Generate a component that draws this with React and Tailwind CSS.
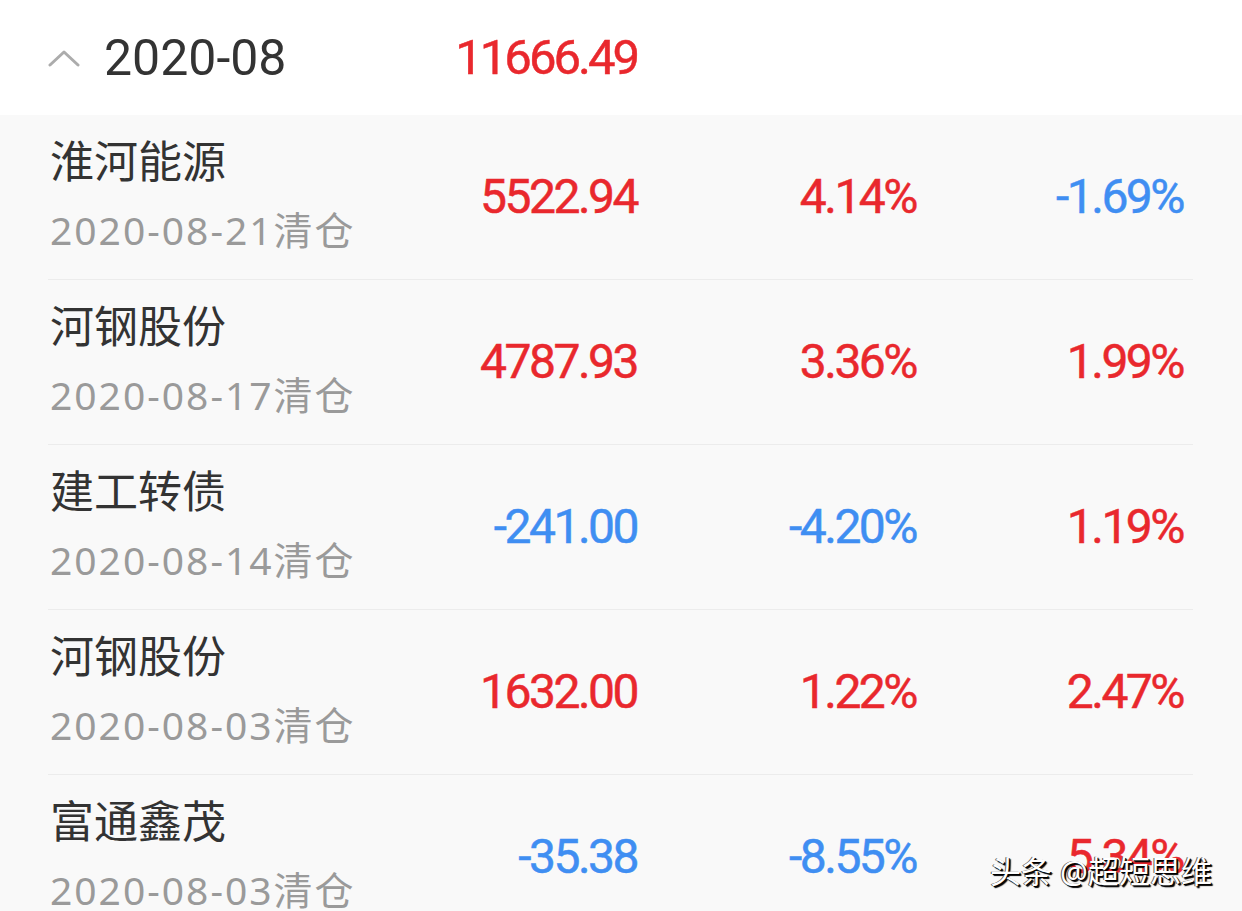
import React from "react";

const rows = [
  { name: "淮河能源", date: "2020-08-21", profit: "5522.94", pct: "4.14%", mkt: "-1.69%" },
  { name: "河钢股份", date: "2020-08-17", profit: "4787.93", pct: "3.36%", mkt: "1.99%" },
  { name: "建工转债", date: "2020-08-14", profit: "-241.00", pct: "-4.20%", mkt: "1.19%" },
  { name: "河钢股份", date: "2020-08-03", profit: "1632.00", pct: "1.22%", mkt: "2.47%" },
  { name: "富通鑫茂", date: "2020-08-03", profit: "-35.38", pct: "-8.55%", mkt: "5.34%" },
];

// red for gains, blue for losses
const tone = (v) => (v.startsWith("-") ? "text-[#3f8ef2]" : "text-[#e9282d]");

const numCls =
  "text-right text-[48px] font-[Roboto,sans-serif] font-normal tracking-[-2.5px] [-webkit-text-stroke:0.5px_currentColor]";

function Row({ r }) {
  return (
    <div className="ml-[48px] mr-[49px] h-[165px] border-b border-[#ececec] flex items-center pr-[10px]">
      <div className="flex-1 flex flex-col pl-[2px] font-['Noto_Sans','Noto_Sans_CJK_SC',sans-serif]">
        <div className="text-[44px] leading-[66px] text-[#333]">{r.name}</div>
        <div className="text-[39px] leading-[72px] text-[#9a9a9a] tracking-[2px]">
          {r.date}清仓
        </div>
      </div>
      <div className={`w-[200px] ${numCls} ${tone(r.profit)}`}>{r.profit}</div>
      <div className={`w-[279px] ${numCls} ${tone(r.pct)}`}>{r.pct}</div>
      <div className={`w-[267px] ${numCls} ${tone(r.mkt)}`}>{r.mkt}</div>
    </div>
  );
}

export default function App() {
  return (
    <div className="relative w-[1242px] h-[911px] overflow-hidden bg-[#f9f9f9]">
      {/* Month header */}
      <div className="h-[115px] bg-white flex items-center pl-[48px]">
        <div className="w-[56px] flex items-center">
          <svg width="32" height="18" viewBox="0 0 32 18" fill="none">
            <path d="M2 16 L16 3 L30 16" stroke="#acacac" strokeWidth="3" strokeLinecap="round" strokeLinejoin="round" />
          </svg>
        </div>
        <div className="w-[333px] text-[50px] text-[#333] leading-none font-[Roboto,sans-serif]">
          2020-08
        </div>
        <div className="w-[200px] text-right text-[49px] font-normal tracking-[-3px] text-[#e9282d] leading-none font-[Roboto,sans-serif] [-webkit-text-stroke:0.5px_currentColor]">
          11666.49
        </div>
      </div>

      {rows.map((r, i) => (
        <Row key={i} r={r} />
      ))}

      {/* watermark */}
      <div className="absolute left-[990px] top-[848px] text-[31px] text-white whitespace-nowrap font-['Noto_Sans','Noto_Sans_CJK_SC',sans-serif] [text-shadow:1px_1px_0_#000,-1px_0_0_#555,2px_2px_1px_#000]">
        头条 @超短思维
      </div>
    </div>
  );
}
